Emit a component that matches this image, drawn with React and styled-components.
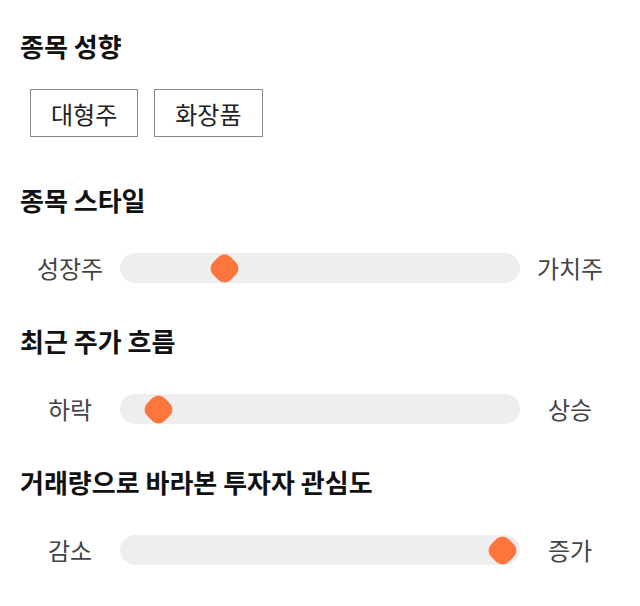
import React from 'react';
import styled, { createGlobalStyle } from 'styled-components';

const GlobalStyle = createGlobalStyle`
    body {
        margin: 0;
        background: #ffffff;
        font-family: "Noto Sans CJK KR", "Noto Sans", sans-serif;
        color: #222222;
    }
`;

const Page = styled.div`
    width: 600px;
    padding: 30px 20px 20px;
    display: flex;
    flex-direction: column;
`;

const Section = styled.section`
    display: flex;
    flex-direction: column;
    margin-bottom: ${(p) => p.$after}px;
`;

const Title = styled.h2`
    margin: 0 0 ${(p) => p.$gap}px;
    font-size: 26px;
    line-height: 32px;
    font-weight: 700;
    color: #111111;
`;

// tag buttons
const TagRow = styled.div`
    display: flex;
    gap: 16px;
    padding-left: 10px;
`;

const Tag = styled.button`
    height: 48px;
    padding: 0 20px;
    border: 1px solid #8a8a8a;
    background: #ffffff;
    font-family: inherit;
    font-size: 24px;
    color: #222222;
    cursor: pointer;
`;

// slider row
const SliderRow = styled.div`
    display: grid;
    grid-template-columns: 100px 400px 100px;
    align-items: center;
    height: 30px;
`;

const Side = styled.span`
    text-align: center;
    font-size: 24px;
    line-height: 30px;
    color: #444444;
`;

const Track = styled.div`
    position: relative;
    height: 30px;
    border-radius: 15px;
    background: #eeeeee;
`;

const Thumb = styled.div`
    position: absolute;
    top: 50%;
    width: 25px;
    height: 25px;
    margin: -12.5px 0 0 -12.5px;
    border-radius: 9px;
    background: #ff763d;
    transform: rotate(45deg);
`;

const sliders = [
    { title: '종목 스타일', left: '성장주', right: '가치주', value: 26 },
    { title: '최근 주가 흐름', left: '하락', right: '상승', value: 9.6 },
    { title: '거래량으로 바라본 투자자 관심도', left: '감소', right: '증가', value: 95.5 },
];

const App = () => {
    return (
        <Page>
            <GlobalStyle />
            <Section $after={47}>
                <Title $gap={27}>종목 성향</Title>
                <TagRow>
                    <Tag>대형주</Tag>
                    <Tag>화장품</Tag>
                </TagRow>
            </Section>

            {sliders.map((s, i) => (
                <Section key={s.title} $after={i < sliders.length - 1 ? 42 : 0}>
                    <Title $gap={37}>{s.title}</Title>
                    <SliderRow>
                        <Side>{s.left}</Side>
                        <Track>
                            <Thumb style={{ left: `${s.value}%` }} />
                        </Track>
                        <Side>{s.right}</Side>
                    </SliderRow>
                </Section>
            ))}
        </Page>
    );
};

export default App;
